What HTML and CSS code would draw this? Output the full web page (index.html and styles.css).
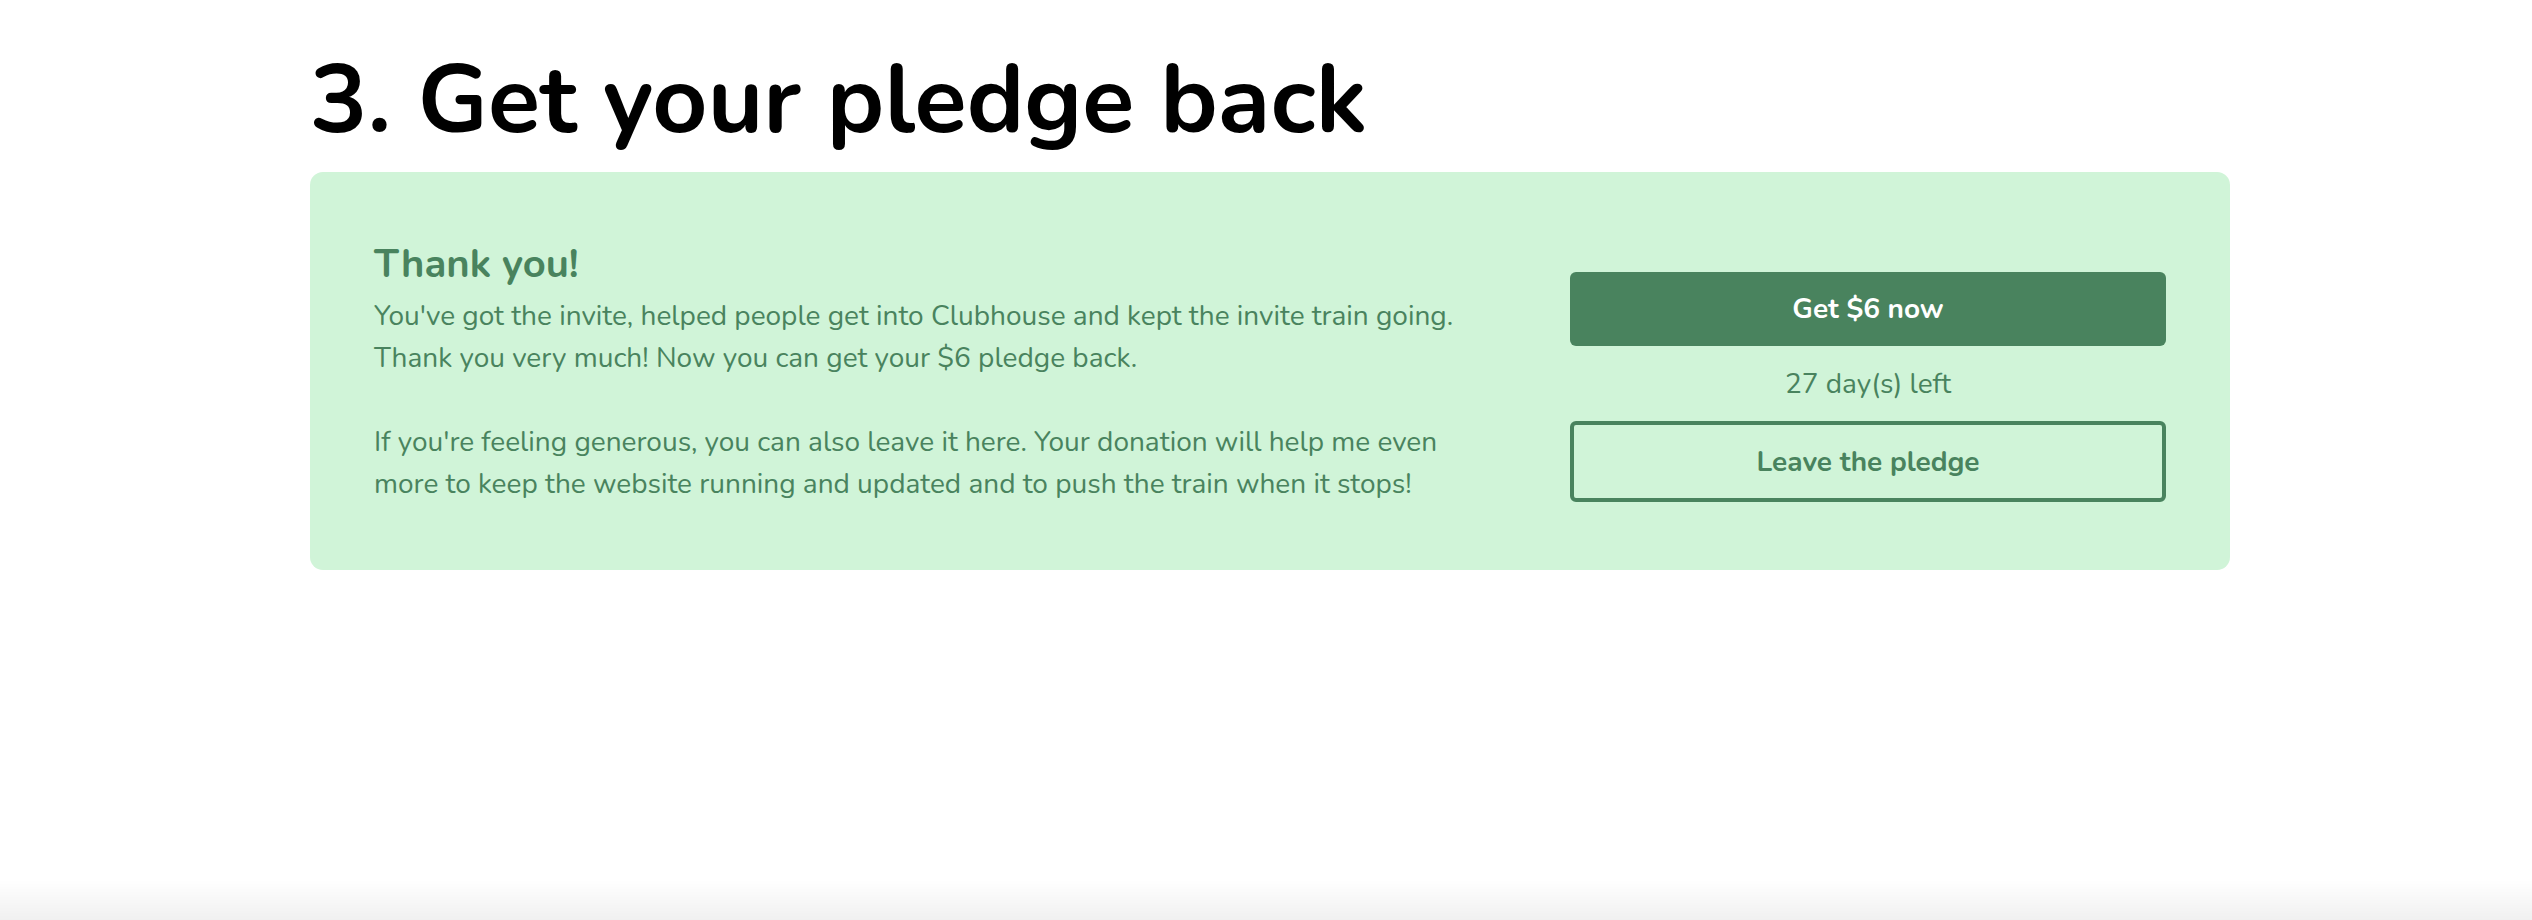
FILE: index.html
```html
<!DOCTYPE html>
<html lang="en">
<head>
<meta charset="utf-8">
<title>Get your pledge back</title>
<link rel="stylesheet" href="styles.css">
</head>
<body>
<main class="page">
  <h1 class="title">3. Get your pledge back</h1>
  <section class="card">
    <div class="card-text">
      <h2 class="card-title">Thank you!</h2>
      <p class="card-copy">You've got the invite, helped people get into Clubhouse and kept the invite train going. Thank you very much! Now you can get your $6 pledge back.</p>
      <p class="card-copy">If you're feeling generous, you can also leave it here. Your donation will help me even more to keep the website running and updated and to push the train when it stops!</p>
    </div>
    <div class="card-actions">
      <button class="btn btn-primary" type="button">Get $6 now</button>
      <div class="days-left">27 day(s) left</div>
      <button class="btn btn-outline" type="button">Leave the pledge</button>
    </div>
  </section>
</main>
<div class="bottom-fade"></div>
</body>
</html>
```
FILE: styles.css
```css
* { box-sizing: border-box; }
html, body { margin: 0; padding: 0; background: #fff; }
body {
  font-family: "Nunito", "Lato", "Noto Sans", sans-serif;
  color: #000;
  height: 920px;
  overflow: hidden;
}
.page {
  width: 1920px;
  margin-left: 310px;
  padding-top: 43px;
}
.title {
  margin: 0 0 14px 0;
  font-size: 96px;
  line-height: 115px;
  font-weight: 700;
  letter-spacing: 0;
  color: #000;
}
.card {
  background: #d0f4d8;
  border-radius: 13px;
  padding: 64px;
  height: 398px;
  display: grid;
  grid-template-columns: 1fr 596px;
  column-gap: 80px;
  align-items: start;
  color: #49835e;
}
.card-title {
  margin: 0 0 3px 0;
  font-size: 40px;
  line-height: 56px;
  font-weight: 700;
}
.card-copy {
  margin: 0;
  font-size: 28px;
  line-height: 42px;
}
.card-copy + .card-copy { margin-top: 42px; }
.card-actions {
  padding-top: 36px;
  display: flex;
  flex-direction: column;
}
.btn {
  font-family: inherit;
  font-size: 28px;
  font-weight: 700;
  border-radius: 6px;
  cursor: pointer;
  width: 100%;
}
.btn-primary {
  height: 74px;
  background: #49835e;
  color: #fff;
  border: none;
}
.btn-outline {
  height: 81px;
  background: transparent;
  color: #49835e;
  border: 4px solid #49835e;
}
.days-left {
  height: 75px;
  display: flex;
  align-items: center;
  justify-content: center;
  font-size: 28px;
}
.bottom-fade {
  position: fixed;
  left: 0;
  right: 0;
  bottom: 0;
  height: 40px;
  background: linear-gradient(to bottom, rgba(240,240,240,0), #f0f0f0);
  pointer-events: none;
}
```
